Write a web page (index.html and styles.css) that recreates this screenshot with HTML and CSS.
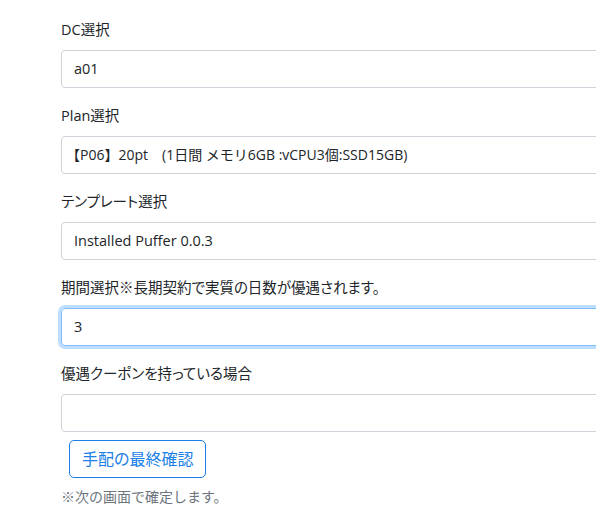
FILE: index.html
```html
<!DOCTYPE html>
<html lang="ja">
<head>
<meta charset="utf-8">
<title>手配</title>
<link rel="stylesheet" href="styles.css">
</head>
<body>
<form class="order-form">
  <div class="form-group">
    <label class="form-label">DC選択</label>
    <div class="form-control">a01</div>
  </div>
  <div class="form-group">
    <label class="form-label">Plan選択</label>
    <div class="form-control plan">【P06】20pt　(1日間 メモリ6GB :vCPU3個:SSD15GB)</div>
  </div>
  <div class="form-group">
    <label class="form-label">テンプレート選択</label>
    <div class="form-control">Installed Puffer 0.0.3</div>
  </div>
  <div class="form-group">
    <label class="form-label">期間選択※長期契約で実質の日数が優遇されます。</label>
    <div class="form-control is-focused">3</div>
  </div>
  <div class="form-group last">
    <label class="form-label">優遇クーポンを持っている場合</label>
    <div class="form-control"></div>
  </div>
  <button type="button" class="btn-outline">手配の最終確認</button>
  <p class="note">※次の画面で確定します。</p>
</form>
</body>
</html>
```
FILE: styles.css
```css
html, body {
  overflow: hidden;
}
body {
  margin: 0;
  background: #fff;
  color: #212529;
  font-family: "Open Sans", "Noto Sans CJK JP", sans-serif;
}
.order-form {
  padding: 18px 0 0 61px;
  width: 700px;
}
.form-group {
  display: flex;
  flex-direction: column;
  margin-bottom: 16px;
}
.form-group.last {
  margin-bottom: 0;
}
.form-label {
  font-size: 14.5px;
  line-height: 24px;
  margin-bottom: 8px;
  color: #212529;
  font-feature-settings: "palt";
}
.form-control {
  box-sizing: border-box;
  height: 38px;
  padding: 0 12px;
  border: 1px solid #ced4da;
  border-radius: 4px;
  font-size: 14.5px;
  line-height: 36px;
  color: #212529;
  white-space: nowrap;
}
.form-control.plan {
  font-size: 14px;
  text-indent: -8px;
}
.form-control.is-focused {
  border-color: #80bdff;
  box-shadow: 0 0 0 3px rgba(0, 123, 255, 0.25);
}
.btn-outline {
  display: block;
  box-sizing: border-box;
  margin: 8px 0 0 8px;
  height: 38px;
  padding: 0 12px;
  background: #fff;
  border: 1px solid #1a7fe6;
  border-radius: 5px;
  color: #1a7fe6;
  font-family: "Open Sans", "Noto Sans CJK JP", sans-serif;
  font-size: 16px;
  line-height: 36px;
  font-feature-settings: "palt";
}
.note {
  margin: 8px 0 0;
  font-size: 14px;
  line-height: 21px;
  color: #6c757d;
}
```
